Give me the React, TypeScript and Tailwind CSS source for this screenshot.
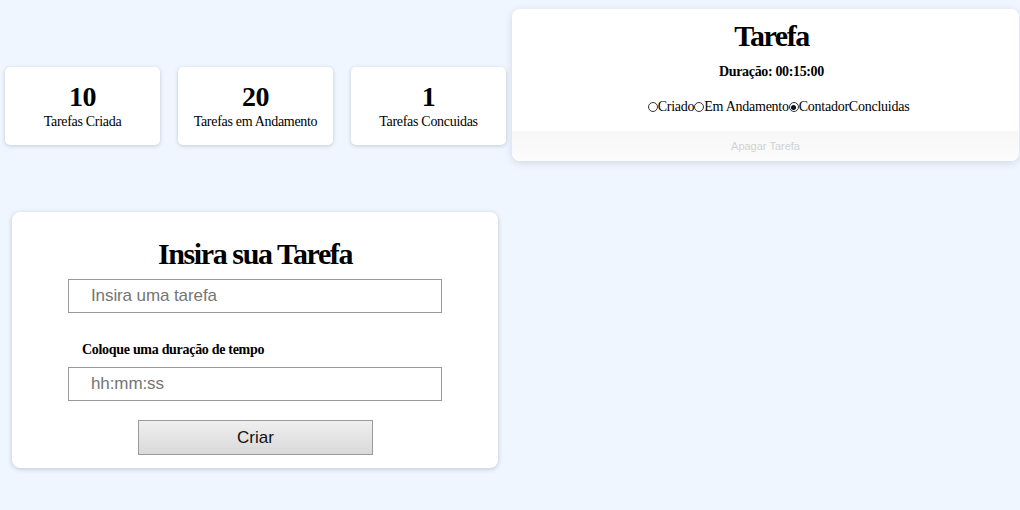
import { useState } from "react";

type Stat = { value: number; label: string };

const stats: Stat[] = [
  { value: 10, label: "Tarefas Criada" },
  { value: 20, label: "Tarefas em Andamento" },
  { value: 1, label: "Tarefas Concuidas" },
];

function StatCard({ stat }: { stat: Stat }) {
  return (
    <div className="flex h-[78px] w-[155px] flex-col items-center justify-center rounded-[5px] bg-white shadow-[0_1px_4px_rgba(0,0,0,0.18)]">
      <span className="text-[28px] font-bold leading-[32px] tracking-[-0.5px]">{stat.value}</span>
      <span className="text-[14px] leading-[18px] tracking-[-0.3px]">{stat.label}</span>
    </div>
  );
}

function Radio({ checked }: { checked?: boolean }) {
  return (
    <span className="inline-flex h-[10px] w-[10px] items-center justify-center rounded-full border border-[#333]">
      {checked && <span className="h-[5px] w-[5px] rounded-full bg-[#111]" />}
    </span>
  );
}

function TaskPanel() {
  return (
    <div className="flex h-[152px] w-[507px] flex-col overflow-hidden rounded-[8px] bg-white shadow-[0_2px_8px_rgba(0,0,0,0.12)]">
      <div className="flex flex-1 flex-col items-center pl-[12px] pt-[10px]">
        <h2 className="text-[30px] font-bold leading-[34px] tracking-[-1.5px]">Tarefa</h2>
        <p className="mt-[10px] text-[14px] font-bold leading-[18px] tracking-[-0.35px]">Duração: 00:15:00</p>
        <div className="ml-[14px] mt-[17px] flex items-center text-[14px] leading-[18px] tracking-[-0.25px]">
          <Radio />
          <span>Criado</span>
          <Radio />
          <span>Em Andamento</span>
          <Radio checked />
          <span>Contador</span>
          <span>Concluidas</span>
        </div>
      </div>
      <button
        type="button"
        disabled
        className="h-[30px] w-full bg-gradient-to-b from-[#f7f7f7] to-[#fcfcfc] font-['Liberation_Sans',sans-serif] text-[11px] text-[#d2d2d2]"
      >
        Apagar Tarefa
      </button>
    </div>
  );
}

function TaskForm() {
  const [name, setName] = useState("");
  const [time, setTime] = useState("");

  return (
    <div className="flex h-[256px] w-[486px] flex-col rounded-[8px] bg-white pt-[24px] shadow-[0_1px_5px_rgba(0,0,0,0.2)]">
      <h1 className="text-center text-[30px] font-bold leading-[36px] tracking-[-1.4px]">Insira sua Tarefa</h1>
      <input
        value={name}
        onChange={(e) => setName(e.target.value)}
        placeholder="Insira uma tarefa"
        className="ml-[56px] mt-[7px] h-[34px] w-[374px] border border-[#9a9a9a] pl-[22px] font-['Liberation_Sans',sans-serif] text-[17px] tracking-[-0.1px] placeholder:text-[#757575]"
      />
      <label className="ml-[70px] mt-[28px] text-[14px] font-bold leading-[18px] tracking-[-0.3px]">
        Coloque uma duração de tempo
      </label>
      <input
        value={time}
        onChange={(e) => setTime(e.target.value)}
        placeholder="hh:mm:ss"
        className="ml-[56px] mt-[8px] h-[34px] w-[374px] border border-[#9a9a9a] pl-[22px] font-['Liberation_Sans',sans-serif] text-[17px] tracking-[-0.1px] placeholder:text-[#757575]"
      />
      <button
        type="button"
        className="ml-[126px] mt-[19px] h-[35px] w-[235px] border border-[#9a9a9a] bg-gradient-to-b from-[#efefef] to-[#d9d9d9] font-['Liberation_Sans',sans-serif] text-[17px] text-[#111]"
      >
        Criar
      </button>
    </div>
  );
}

export default function App() {
  return (
    <div className="flex h-[510px] w-[1020px] items-start overflow-hidden bg-[#eff6ff] font-['Liberation_Serif',serif] text-black">
      <div className="flex w-[507px] flex-col">
        <div className="ml-[5px] mt-[67px] flex gap-[18px]">
          {stats.map((s) => (
            <StatCard key={s.label} stat={s} />
          ))}
        </div>
        <div className="ml-[12px] mt-[67px]">
          <TaskForm />
        </div>
      </div>
      <div className="ml-[5px] mt-[9px]">
        <TaskPanel />
      </div>
    </div>
  );
}
